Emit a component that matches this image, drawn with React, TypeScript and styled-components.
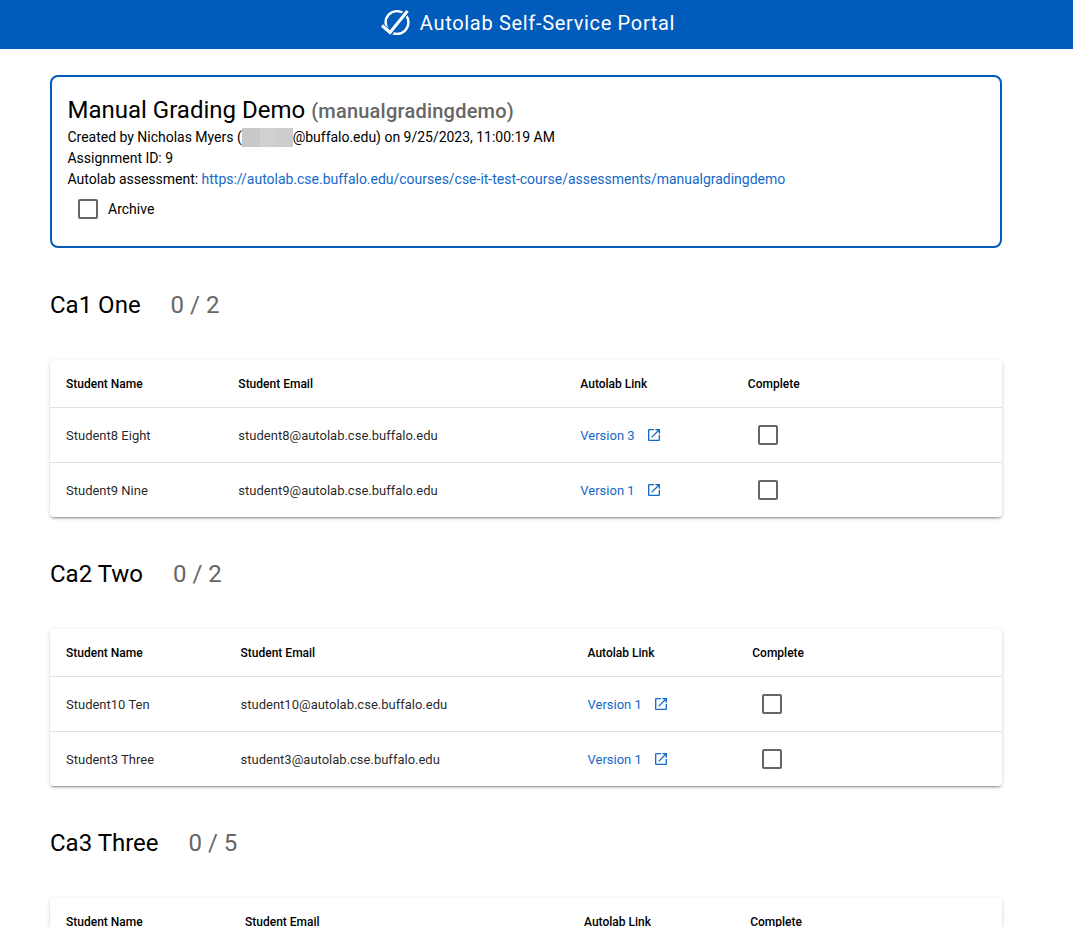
import styled, {createGlobalStyle} from "styled-components";

const GlobalStyle = createGlobalStyle`
  html, body {
    margin: 0;
    padding: 0;
    background: #fff;
    font-family: Roboto, "Liberation Sans", sans-serif;
    color: rgba(0, 0, 0, 0.87);
    overflow: hidden;
  }
`;

const blue = "#005bbb";
const linkBlue = "#1569c7";

const Header = styled.header`
  box-sizing: border-box;
  height: 49px;
  padding: 0 18px 4px 0;
  background: ${blue};
  color: #fff;
  display: flex;
  align-items: center;
  justify-content: center;
  gap: 10px;
  font-size: 20px;
  letter-spacing: 0.68px;
`;

const Main = styled.main`
  width: 952px;
  margin-left: 50px;
  padding-top: 26px;
`;

const InfoCard = styled.section`
  box-sizing: border-box;
  height: 173px;
  border: 2px solid ${blue};
  border-radius: 8px;
  padding: 17px 16px 17px 15.5px;
  margin-bottom: 39px;
`;

const Title = styled.h1`
  margin: 0;
  font-size: 24px;
  line-height: 32px;
  font-weight: 400;
  color: #000;
`;

const Slug = styled.span`
  font-size: 20px;
  font-weight: 500;
  letter-spacing: 0.22px;
  color: #666;
`;

const InfoLine = styled.div`
  font-size: 14px;
  line-height: 21px;
  letter-spacing: -0.015px;
  color: #000;
`;

const Redacted = styled.span`
  display: inline-block;
  width: 51px;
  height: 19px;
  vertical-align: -5px;
  background: linear-gradient(90deg, #c8c8c8 0 35%, #d0d0d0 35% 67%, #cccccc 67% 100%);
`;

const Link = styled.a`
  color: ${linkBlue};
  text-decoration: none;
`;

const ArchiveRow = styled.label`
  display: flex;
  align-items: center;
  gap: 10px;
  margin: 9px 0 0 10.5px;
  font-size: 14px;
  color: #000;
`;

const Box = styled.span`
  display: block;
  box-sizing: border-box;
  width: 20px;
  height: 20px;
  border: 2px solid #666;
  border-radius: 2px;
`;

const SectionHeading = styled.h2`
  margin: 0 0 37px;
  height: 36px;
  display: flex;
  align-items: center;
  gap: 30px;
  font-size: 24px;
  font-weight: 400;
  color: #000;
`;

const Count = styled.span`
  color: #666;
`;

const TableCard = styled.div`
  background: #fff;
  border-radius: 4px;
  box-shadow: 0 3px 1px -2px rgba(0, 0, 0, 0.2), 0 2px 2px 0 rgba(0, 0, 0, 0.14), 0 1px 5px 0 rgba(0, 0, 0, 0.12);
  margin-bottom: 39px;
`;

const Table = styled.table`
  width: 100%;
  border-collapse: collapse;
  font-size: 13px;
`;

const HeadCell = styled.th`
  height: 47px;
  padding: 0 16px;
  text-align: left;
  font-size: 12px;
  font-weight: 500;
  color: #000;
  border-bottom: 1px solid #e0e0e0;
`;

const Cell = styled.td`
  height: 54px;
  padding: 0 16px;
  color: rgba(0, 0, 0, 0.87);
  border-bottom: 1px solid #e0e0e0;

  tr:last-child > & {
    border-bottom: none;
  }
`;

const SpacerHeadCell = styled(HeadCell)`
  &::before {
    content: "";
    display: block;
    width: 67px;
  }
`;

const VersionLink = styled(Link)`
  display: inline-flex;
  align-items: center;
  gap: 11px;
`;

const CheckCell = styled(Cell)`
  padding-left: 26px;
`;

function LogoIcon() {
  return (
    <svg width="30" height="30" viewBox="0 0 30 30" fill="none">
      <circle cx="17" cy="14.5" r="11.4" stroke="#fff" strokeWidth="2.4"/>
      <path d="M1.5 17.5l8.5 7.5L28 2" stroke="#005bbb" strokeWidth="5.5"/>
      <path d="M2 17.5l8 7L27.5 3" stroke="#fff" strokeWidth="3"/>
    </svg>
  );
}

function OpenInNew() {
  return (
    <svg width="16" height="16" viewBox="0 0 24 24" fill={linkBlue}>
      <path d="M19 19H5V5h7V3H5c-1.11 0-2 .9-2 2v14c0 1.1.89 2 2 2h14c1.1 0 2-.9 2-2v-7h-2v7zM14 3v2h3.59l-9.83 9.83 1.41 1.41L19 6.41V10h2V3h-7z"/>
    </svg>
  );
}

type Row = {name: string; email: string; version: number};
type Section = {title: string; total: number; rows: Row[]};

const sections: Section[] = [
  {
    title: "Ca1 One",
    total: 2,
    rows: [
      {name: "Student8 Eight", email: "student8@autolab.cse.buffalo.edu", version: 3},
      {name: "Student9 Nine", email: "student9@autolab.cse.buffalo.edu", version: 1},
    ],
  },
  {
    title: "Ca2 Two",
    total: 2,
    rows: [
      {name: "Student10 Ten", email: "student10@autolab.cse.buffalo.edu", version: 1},
      {name: "Student3 Three", email: "student3@autolab.cse.buffalo.edu", version: 1},
    ],
  },
  {
    title: "Ca3 Three",
    total: 5,
    rows: [
      {name: "Student1 One", email: "student1@autolab.cse.buffalo.edu", version: 1},
      {name: "Student2 Two", email: "student2@autolab.cse.buffalo.edu", version: 1},
      {name: "Student4 Four", email: "student4@autolab.cse.buffalo.edu", version: 1},
      {name: "Student5 Five", email: "student5@autolab.cse.buffalo.edu", version: 1},
      {name: "Student7 Seven", email: "student7@autolab.cse.buffalo.edu", version: 1},
    ],
  },
];

export default function App() {
  return (
    <>
      <GlobalStyle/>
      <Header>
        <LogoIcon/>
        Autolab Self-Service Portal
      </Header>
      <Main>
        <InfoCard>
          <Title>Manual Grading Demo <Slug>(manualgradingdemo)</Slug></Title>
          <InfoLine>Created by Nicholas Myers (<Redacted/>@buffalo.edu) on 9/25/2023, 11:00:19 AM</InfoLine>
          <InfoLine>Assignment ID: 9</InfoLine>
          <InfoLine>
            Autolab assessment: <Link href="#">https://autolab.cse.buffalo.edu/courses/cse-it-test-course/assessments/manualgradingdemo</Link>
          </InfoLine>
          <ArchiveRow><Box/>Archive</ArchiveRow>
        </InfoCard>
        {sections.map((section) => (
          <section key={section.title}>
            <SectionHeading>
              {section.title}
              <Count>0 / {section.total}</Count>
            </SectionHeading>
            <TableCard>
              <Table>
                <thead>
                  <tr>
                    <HeadCell>Student Name</HeadCell>
                    <HeadCell>Student Email</HeadCell>
                    <HeadCell>Autolab Link</HeadCell>
                    <HeadCell>Complete</HeadCell>
                    <SpacerHeadCell/>
                  </tr>
                </thead>
                <tbody>
                  {section.rows.map((row) => (
                    <tr key={row.email}>
                      <Cell>{row.name}</Cell>
                      <Cell>{row.email}</Cell>
                      <Cell>
                        <VersionLink href="#">Version {row.version} <OpenInNew/></VersionLink>
                      </Cell>
                      <CheckCell><Box/></CheckCell>
                      <Cell/>
                    </tr>
                  ))}
                </tbody>
              </Table>
            </TableCard>
          </section>
        ))}
      </Main>
    </>
  );
}
